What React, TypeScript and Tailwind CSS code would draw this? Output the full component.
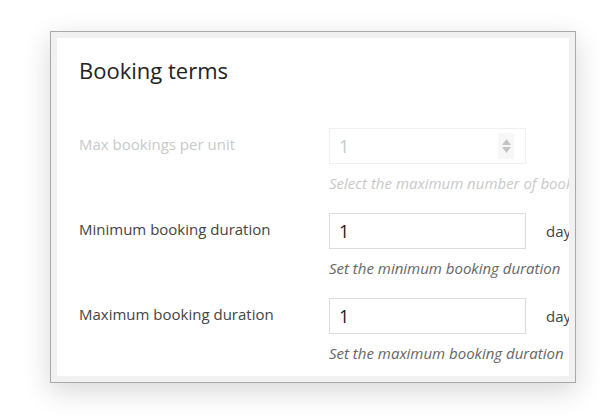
const font = { fontFamily: '"Open Sans", "Noto Sans", sans-serif' };

function Spinner() {
  return (
    <span className="flex h-[26px] w-[16px] flex-col items-center justify-center gap-[2px] bg-[#f7f7f7]">
      <svg width="9" height="6" viewBox="0 0 9 6">
        <path d="M0 6 L4.5 0 L9 6 Z" fill="#c4c4c4" />
      </svg>
      <svg width="9" height="6" viewBox="0 0 9 6">
        <path d="M0 0 L4.5 6 L9 0 Z" fill="#c4c4c4" />
      </svg>
    </span>
  );
}

type Row = {
  label: string;
  help: string;
  disabled?: boolean;
  unit?: string;
};

const rows: Row[] = [
  { label: "Max bookings per unit", help: "Select the maximum number of bookings per unit", disabled: true },
  { label: "Minimum booking duration", help: "Set the minimum booking duration", unit: "days" },
  { label: "Maximum booking duration", help: "Set the maximum booking duration", unit: "days" },
];

export default function App() {
  return (
    <div className="h-[420px] w-[600px] bg-white pl-[50px] pt-[31px]" style={font}>
      <div className="h-[352px] w-[526px] border border-[#a8a8a8] bg-[#f1f1f1] p-[6px] shadow-[0_8px_26px_rgba(0,0,0,0.16)]">
        <div className="h-full w-full overflow-hidden bg-white pl-[22px] pt-[16px]">
          <h2 className="text-[22px] leading-[32px] text-[#222]">Booking terms</h2>
          <div className="mt-[42px] flex flex-col gap-[20px]">
            {rows.map((r) => (
              <div key={r.label} className="flex">
                <div
                  className={
                    "w-[250px] shrink-0 pt-[6px] text-[15px] leading-[20px] " +
                    (r.disabled ? "text-[#c9c9c9]" : "text-[#444]")
                  }
                >
                  {r.label}
                </div>
                <div className="flex flex-col">
                  <div className="flex items-center">
                    <div
                      className={
                        "flex h-[36px] w-[197px] shrink-0 items-center justify-between border pl-[9px] pr-[11px] text-[18px] " +
                        (r.disabled
                          ? "border-[#f0f0f0] text-[#c8c8c8]"
                          : "border-[#dcdcdc] text-[#222]")
                      }
                    >
                      <span>1</span>
                      {r.disabled && <Spinner />}
                    </div>
                    {r.unit && (
                      <span className="ml-[20px] whitespace-nowrap text-[15px] text-[#444]">{r.unit}</span>
                    )}
                  </div>
                  <div
                    className={
                      "mt-[9px] whitespace-nowrap text-[15px] italic leading-[20px] " +
                      (r.disabled ? "text-[#c9c9c9]" : "text-[#666]")
                    }
                  >
                    {r.help}
                  </div>
                </div>
              </div>
            ))}
          </div>
        </div>
      </div>
    </div>
  );
}
